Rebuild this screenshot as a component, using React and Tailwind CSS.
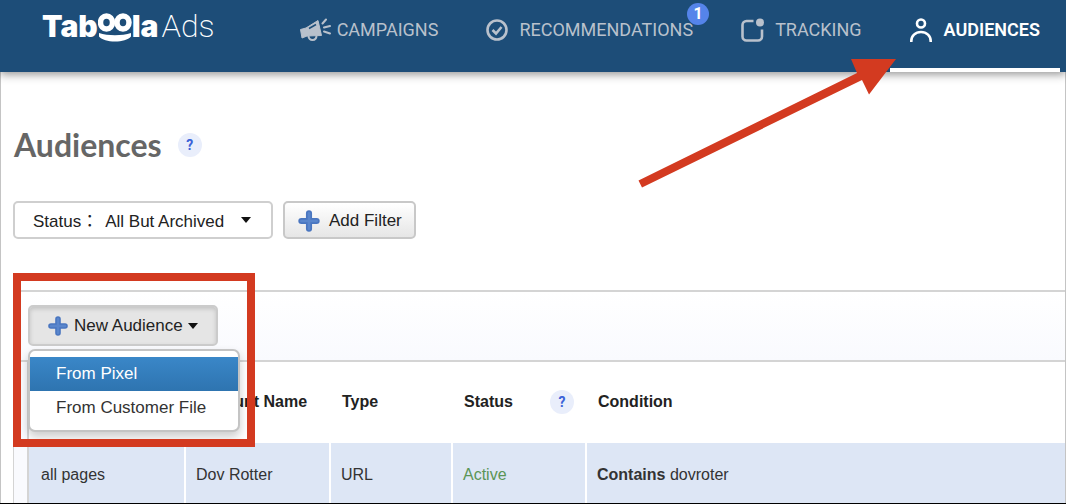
import { useState } from "react";

const audiences = [
  { name: "all pages", account: "Dov Rotter", type: "URL", status: "Active", rule: "Contains", value: "dovroter" },
];

function Logo() {
  return (
    <a href="#home" className="flex items-baseline text-white leading-8" aria-label="Taboola Ads">
      <span className="font-[Inter,sans-serif] font-black text-[30px]">Tab</span>
      <svg width="34" height="29" viewBox="0 0 34 29" className="self-start mt-[3px] shrink-0" aria-hidden="true">
        <g fill="none" stroke="currentColor" strokeWidth="5.500">
          <ellipse cx="8.500" cy="9.500" rx="6" ry="6.500" />
          <ellipse cx="25" cy="9.500" rx="6" ry="6.500" />
        </g>
        <path d="M1 20c9 3 23 3 32 0v3.500c-3 3.500-9 5-16 5s-13-1.500-16-5z" fill="currentColor" />
      </svg>
      <span className="font-[Inter,sans-serif] font-black text-[30px]">la</span>
      <span className="ml-[3px] font-[Roboto,sans-serif] font-extralight text-[32px]">Ads</span>
    </a>
  );
}

function CampaignIcon() {
  return (
    <svg width="31" height="24" viewBox="0 0 31 24" fill="none" stroke="currentColor" aria-hidden="true">
      <path d="M0.500 11.500 6 10 18 2.500 21.500 17.500 7 18 2 20z" fill="currentColor" strokeLinejoin="round" />
      <path d="M8.500 18c0 5.500 8 5.500 8-.5" strokeWidth="2" />
      <path d="M9 10.500 16 6.500" stroke="#1d4d78" strokeWidth="1.500" />
      <path d="M22.500 5.500 26 1.500M24 9.500l6-1.500M24 13.500l6 2" strokeWidth="2" strokeLinecap="round" />
    </svg>
  );
}

function CheckIcon() {
  return (
    <svg width="22" height="22" viewBox="0 0 22 22" fill="none" stroke="currentColor" strokeWidth="2.600" aria-hidden="true">
      <circle cx="11" cy="11" r="9.500" />
      <path d="m6.500 11 3.500 3.500 5.500-6.500" />
    </svg>
  );
}

function TrackingIcon() {
  return (
    <svg width="23" height="24" viewBox="0 0 23 24" aria-hidden="true">
      <path d="M12.500 3H5.500a4 4 0 0 0-4 4v11.500a4 4 0 0 0 4 4h11.500a4 4 0 0 0 4-4V11.500" fill="none" stroke="currentColor" strokeWidth="2.600" />
      <circle cx="19" cy="4.500" r="4" fill="currentColor" />
    </svg>
  );
}

function AudienceIcon() {
  return (
    <svg width="22" height="24" viewBox="0 0 22 24" fill="none" stroke="currentColor" strokeWidth="2.600" aria-hidden="true">
      <circle cx="11" cy="5.500" r="4" />
      <path d="M1.300 24v-1c0-5 4-9 9.700-9s9.700 4 9.700 9v1" />
    </svg>
  );
}

function PlusIcon({ size }) {
  return (
    <svg width={size} height={size} viewBox="0 0 22 22" aria-hidden="true">
      <path d="M11 4v14M4 11h14" stroke="#4a76c0" strokeWidth="5.600" strokeLinecap="round" />
      <path d="M11 4v14M4 11h14" stroke="#5a86cc" strokeWidth="2.500" strokeLinecap="round" />
    </svg>
  );
}

function Caret() {
  return (
    <svg width="10" height="6" viewBox="0 0 10 6" aria-hidden="true">
      <path d="M0 0h10L5 6z" fill="#111" />
    </svg>
  );
}

function Help({ label }) {
  return (
    <button
      aria-label={label}
      className="w-6 h-6 rounded-full bg-[#e9eefb] text-[#3a62d8] text-sm font-bold font-[Roboto,sans-serif] flex items-center justify-center"
    >
      ?
    </button>
  );
}

function NavItem({ href, icon, label, badge }) {
  return (
    <a href={href} className="relative flex items-center h-[60px] text-[#b9c1cc] gap-[11px]">
      {icon}
      <span>{label}</span>
      {badge && (
        <span className="absolute top-[3px] -right-4 w-[22px] h-[22px] rounded-full bg-[#5584ea] text-white text-base font-bold flex items-center justify-center">
          {badge}
        </span>
      )}
    </a>
  );
}

function Arrow() {
  return (
    <svg width="260" height="132" viewBox="0 0 260 132" className="absolute top-[57px] -left-[252px] z-20 pointer-events-none" aria-hidden="true">
      <path d="M0.500 123.500 219 16 213 2h45l-27 35.500-7-14.500L4 130.500z" fill="#d33a20" />
    </svg>
  );
}

function Header() {
  return (
    <header className="relative z-10 h-[72px] bg-[#1d4d78] shadow-[0_2px_9px_rgba(0,0,0,0.45)] flex justify-between pl-[42px] pr-[6px]">
      <div className="pt-[10px]">
        <Logo />
      </div>
      <nav className="flex gap-12 font-[Roboto,sans-serif] text-lg">
        <a href="#campaigns" className="flex items-center h-[60px] gap-[6px] text-[#b9c1cc]">
          <CampaignIcon />
          <span>CAMPAIGNS</span>
        </a>
        <NavItem href="#recommendations" icon={<CheckIcon />} label="RECOMMENDATIONS" badge="1" />
        <NavItem href="#tracking" icon={<TrackingIcon />} label="TRACKING" />
        <a
          href="#audiences"
          aria-current="page"
          className="relative -ml-5 px-5 pb-2 h-[72px] flex items-center gap-3 text-white font-semibold border-b-4 border-white"
        >
          <AudienceIcon />
          <span>AUDIENCES</span>
          <Arrow />
        </a>
      </nav>
    </header>
  );
}

function Filters() {
  return (
    <div className="flex gap-[10px] mt-[31px] pl-3">
      <label className="relative flex items-center w-[260px] h-[38px] pt-1 pl-[18px] border-2 border-[#cfcfcf] rounded-[5px] bg-white">
        <span>Status：</span>
        <select className="appearance-none bg-transparent ml-[7px] w-[160px] outline-none">
          <option>All But Archived</option>
          <option>Archived</option>
        </select>
        <span className="absolute right-[20px] top-[14px] pointer-events-none">
          <Caret />
        </span>
      </label>
      <button className="flex items-center gap-2 h-[38px] px-3 pt-[2px] border-2 border-[#c8c8c8] rounded-[5px] bg-linear-to-b from-white to-[#e6e6e6]">
        <PlusIcon size={24} />
        Add Filter
      </button>
    </div>
  );
}

function NewAudience() {
  const [open, setOpen] = useState(true);

  return (
    <div className="relative w-fit">
      <button
        onClick={() => setOpen(!open)}
        aria-expanded={open}
        className="flex items-center w-[190px] h-[41px] pl-[17px] border-2 border-[#cbcbcb] rounded-[5px] bg-[#e5e5e5] shadow-[inset_0_2px_4px_rgba(0,0,0,0.15)]"
      >
        <PlusIcon size={22} />
        <span className="mx-[5px]">New Audience</span>
        <Caret />
      </button>
      {open && (
        <ul className="absolute z-10 top-[44px] left-0 w-[212px] pt-[6px] pb-[5px] bg-white border-2 border-[#c4c4c4] rounded-[7px] shadow-[0_5px_10px_rgba(0,0,0,0.2)]">
          <li>
            <a href="#pixel" className="block h-[34px] leading-[34px] pl-[26px] text-white bg-linear-to-b from-[#3a87c8] to-[#2e74b0]">
              From Pixel
            </a>
          </li>
          <li>
            <a href="#file" className="block h-[34px] leading-[34px] pl-[26px] text-[#333]">
              From Customer File
            </a>
          </li>
        </ul>
      )}
      <div className="absolute z-20 -left-[15px] -top-[32px] w-[242px] h-[174px] border-8 border-[#d33a20] pointer-events-none" />
    </div>
  );
}

function AudienceTable() {
  return (
    <table className="w-full table-fixed border-collapse text-base text-left bg-white">
      <colgroup>
        <col className="w-[156px]" />
        <col className="w-[145px]" />
        <col className="w-[122px]" />
        <col className="w-[134px]" />
        <col />
      </colgroup>
      <thead>
        <tr className="h-[81px] text-[#222]">
          <th aria-label="Audience" />
          <th className="pl-[10px] pb-[2px] whitespace-nowrap">Account Name</th>
          <th className="pl-3 pb-[2px]">Type</th>
          <th className="pl-3 pb-[2px]">
            <div className="flex items-center justify-between pr-3">
              Status
              <Help label="About status" />
            </div>
          </th>
          <th className="pl-3 pb-[2px]">Condition</th>
        </tr>
      </thead>
      <tbody>
        {audiences.map((item) => (
          <tr key={item.name} className="h-16 bg-[#dde6f5] text-[#333]">
            <td className="pl-3 border-r-2 border-white">{item.name}</td>
            <td className="pl-[10px] border-r-2 border-white">{item.account}</td>
            <td className="pl-[10px] border-r-2 border-white">{item.type}</td>
            <td className="pl-[10px] border-r-2 border-white text-[#5b9556]">{item.status}</td>
            <td className="pl-[10px]">
              <b>{item.rule}</b> {item.value}
            </td>
          </tr>
        ))}
      </tbody>
    </table>
  );
}

export default function App() {
  return (
    <div className="h-screen overflow-hidden flex flex-col bg-white border-b border-black font-['Liberation_Sans','Noto_Sans_CJK_JP',sans-serif] text-[17px] text-[#222]">
      <Header />
      <main className="flex-1 border-x border-[#c4c4c4]">
        <div className="flex items-center gap-4 h-[50px] mt-12 pl-[13px]">
          <h1 className="font-[Lato,sans-serif] font-bold text-[32px] leading-10 text-[#666]">Audiences</h1>
          <Help label="About audiences" />
        </div>
        <Filters />
        <section className="mt-[51px] ml-3 border-t-2 border-l border-[#d4d4d4] bg-[#f9fafe]">
          <div className="h-[70px] pt-[13px] pl-[14px] border-b-2 border-[#d4d4d4] bg-linear-to-b from-white to-[#f9fafe]">
            <NewAudience />
          </div>
          <div className="ml-[13px] border-l-2 border-[#d4d4d4]">
            <AudienceTable />
          </div>
        </section>
      </main>
    </div>
  );
}
